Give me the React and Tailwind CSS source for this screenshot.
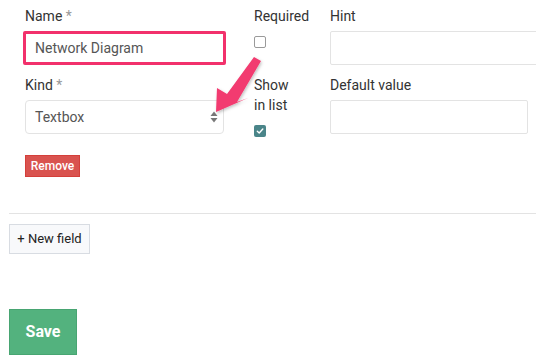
import React from "react";

function Check({ checked }) {
  if (checked) {
    return (
      <div className="w-[12px] h-[12px] rounded-[2px] bg-[#4a8589] flex items-center justify-center">
        <svg width="8" height="8" viewBox="0 0 8 8">
          <path d="M1.3 4.2 L3.2 6 L6.8 2" stroke="white" strokeWidth="1.4" fill="none" strokeLinecap="round" strokeLinejoin="round" />
        </svg>
      </div>
    );
  }
  return <div className="w-[12px] h-[12px] rounded-[2px] border border-[#9a9a9a] bg-white" />;
}

export default function App() {
  return (
    <div className="relative w-[536px] h-[364px] overflow-hidden bg-white font-['Roboto',sans-serif] text-[14px] text-[#333]">
      <div className="pl-[9px] pt-[6px]">
        <div className="pl-[16px] flex">
          {/* column 1 */}
          <div className="w-[200px] shrink-0 flex flex-col">
            <div className="h-5 leading-5">
              Name <span className="text-[#999]">*</span>
            </div>
            <div className="mt-[5px] h-[34px] -ml-[2px] w-[203px] border-[3px] border-[#f2316c] rounded-[2px] flex items-center pl-[9px] text-[#555]">
              Network Diagram
            </div>
            <div className="mt-[10px] h-5 leading-5">
              Kind <span className="text-[#999]">*</span>
            </div>
            <div className="mt-[5px] h-[34px] w-[199px] border border-[#e3e3e3] rounded-[4px] flex items-center justify-between pl-[9px] pr-[5px] text-[#555]">
              <span>Textbox</span>
              <svg width="8" height="12" viewBox="0 0 8 12">
                <path d="M4 0.5 L7.5 5 L0.5 5 Z" fill="#777" />
                <path d="M4 11.5 L7.5 7 L0.5 7 Z" fill="#777" />
              </svg>
            </div>
            <div className="mt-[21px]">
              <div className="inline-flex items-center justify-center w-[55px] h-[22px] bg-[#d9534f] border border-[#d43f3a] text-white text-[12px] font-medium">
                Remove
              </div>
            </div>
          </div>
          {/* column 2 */}
          <div className="ml-[29px] w-[76px] shrink-0 flex flex-col">
            <div className="h-5 leading-5">Required</div>
            <div className="mt-[10px]"><Check /></div>
            <div className="mt-[27px] leading-5">
              Show
              <br />
              in list
            </div>
            <div className="mt-[10px]"><Check checked /></div>
          </div>
          {/* column 3 */}
          <div className="shrink-0 flex flex-col">
            <div className="h-5 leading-5">Hint</div>
            <div className="mt-[5px] h-[34px] w-[212px] border border-[#e3e3e3] rounded-[2px]" />
            <div className="mt-[10px] h-5 leading-5">Default value</div>
            <div className="mt-[5px] h-[34px] w-[198px] border border-[#e3e3e3] rounded-[2px]" />
          </div>
        </div>
        <div className="mt-[36px] h-px bg-[#e3e3e3]" />
        <div className="mt-[10px]">
          <div className="inline-flex items-center justify-center w-[81px] h-[30px] bg-[#f8f9fb] border border-[#d8dce2] text-[13px] text-[#222]">
            + New field
          </div>
        </div>
        <div className="mt-[55px]">
          <div className="inline-flex items-center justify-center w-[68px] h-[46px] bg-[#53b27e] border border-[#48a572] text-white text-[16px] font-bold">
            Save
          </div>
        </div>
      </div>
      <svg className="absolute left-0 top-0 pointer-events-none" width="536" height="364" viewBox="0 0 536 364">
        <defs>
          <filter id="sh" x="-20%" y="-20%" width="140%" height="140%">
            <feDropShadow dx="1" dy="1.5" stdDeviation="1.5" floodColor="#000" floodOpacity="0.25" />
          </filter>
        </defs>
        <polygon
          points="216,112 217,88 227,94 254,57 261,61 237,102 248,98"
          fill="#f23a6f"
          filter="url(#sh)"
          strokeLinejoin="round"
        />
      </svg>
    </div>
  );
}
